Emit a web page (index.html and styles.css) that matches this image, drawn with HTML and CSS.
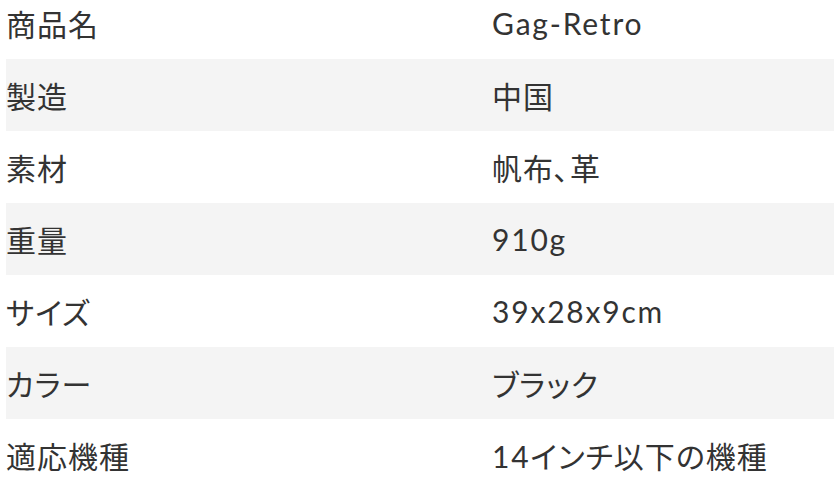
FILE: index.html
```html
<!DOCTYPE html>
<html lang="ja">
<head>
<meta charset="utf-8">
<link rel="stylesheet" href="styles.css">
</head>
<body>
<table class="spec">
  <tbody>
    <tr><th>商品名</th><td><span class="en">Gag-Retro</span></td></tr>
    <tr><th>製造</th><td>中国</td></tr>
    <tr><th>素材</th><td>帆布､革</td></tr>
    <tr><th>重量</th><td><span class="en">910g</span></td></tr>
    <tr><th>サイズ</th><td><span class="en">39x28x9cm</span></td></tr>
    <tr><th>カラー</th><td>ブラック</td></tr>
    <tr><th>適応機種</th><td><span class="en">14</span>インチ以下の機種</td></tr>
  </tbody>
</table>
</body>
</html>
```
FILE: styles.css
```css
html, body {
  margin: 0;
  padding: 0;
  background: #fff;
}
body {
  overflow: hidden;
}
.spec {
  margin: -13px 0 0 6px;
  width: calc(100% - 6px);
  border-collapse: collapse;
  font-family: Lato, "Noto Sans CJK JP", sans-serif;
  font-size: 30px;
  letter-spacing: 1px;
  font-feature-settings: "palt";
  color: #333;
}
.spec tr:nth-child(even) {
  background: #f4f4f4;
}
.spec th, .spec td {
  height: 72px;
  padding: 0;
  text-align: left;
  font-weight: 400;
  vertical-align: middle;
}
.spec th {
  width: 486px;
}
.en {
  letter-spacing: 1.8px;
}
```
